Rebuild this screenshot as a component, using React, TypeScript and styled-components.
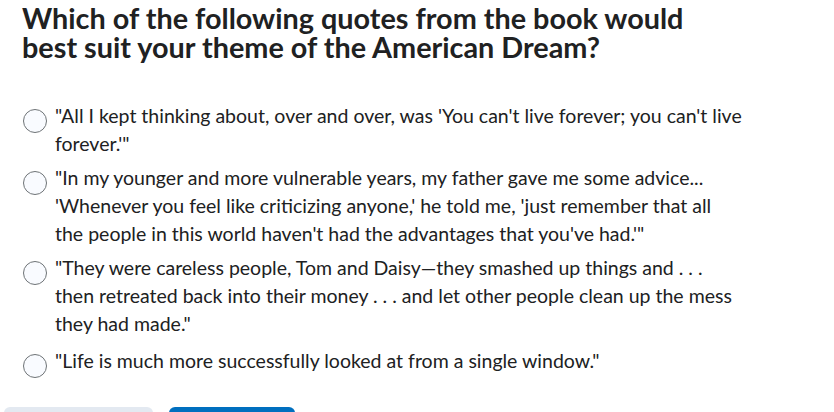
import styled, { createGlobalStyle } from 'styled-components'

const GlobalStyle = createGlobalStyle`
  html, body {
    margin: 0;
    padding: 0;
    background: #ffffff;
  }
  body {
    font-family: Lato, "Open Sans", "Liberation Sans", sans-serif;
    color: #202122;
    overflow: hidden;
  }
`

const Page = styled.div`
  width: 834px;
  height: 412px;
  overflow: hidden;
  display: flex;
  flex-direction: column;
`

const Question = styled.section`
  padding: 4px 0 0 22px;
`

const Heading = styled.h1`
  margin: 0;
  font-size: 28.8px;
  font-weight: 700;
  line-height: 29px;
  color: #202122;
`

const Options = styled.div`
  display: flex;
  flex-direction: column;
  gap: 6px;
  margin-top: 40px;
`

const Option = styled.label`
  display: flex;
  align-items: flex-start;
  gap: 8px;
  cursor: pointer;
  &:last-child {
    margin-top: 3px;
  }
`

const Radio = styled.span`
  flex: none;
  box-sizing: border-box;
  width: 24px;
  height: 24px;
  margin-top: 7px;
  margin-left: 1px;
  border-radius: 50%;
  border: 1px solid #6e7376;
  background: #f9fbff;
`

const OptionText = styled.span`
  font-size: 19.5px;
  line-height: 28px;
  color: #202122;
  max-width: 687px;
`

const Actions = styled.div`
  display: flex;
  gap: 16px;
  margin-top: auto;
  padding-left: 4px;
  height: 5px;
`

const Button = styled.button<{ $primary?: boolean }>`
  width: ${(p) => (p.$primary ? '126px' : '149px')};
  height: 40px;
  border: none;
  border-radius: 6px;
  background: ${(p) => (p.$primary ? '#006fbf' : '#e3e9f1')};
  padding: 0;
`

const quotes = [
  '"All I kept thinking about, over and over, was \'You can\'t live forever; you can\'t live forever.\'"',
  '"In my younger and more vulnerable years, my father gave me some advice... \'Whenever you feel like criticizing anyone,\' he told me, \'just remember that all the people in this world haven\'t had the advantages that you\'ve had.\'"',
  '"They were careless people, Tom and Daisy\u2014they smashed up things and . . . then retreated back into their money . . . and let other people clean up the mess they had made."',
  '"Life is much more successfully looked at from a single window."',
]

const App = (): JSX.Element => (
  <Page>
    <GlobalStyle />
    <Question>
      <Heading>
        Which of the following quotes from the book would
        <br />
        best suit your theme of the American Dream?
      </Heading>
      <Options>
        {quotes.map((q) => (
          <Option key={q}>
            <Radio />
            <OptionText>{q}</OptionText>
          </Option>
        ))}
      </Options>
    </Question>
    <Actions>
      <Button aria-label='Previous' />
      <Button $primary aria-label='Next' />
    </Actions>
  </Page>
)

export default App
